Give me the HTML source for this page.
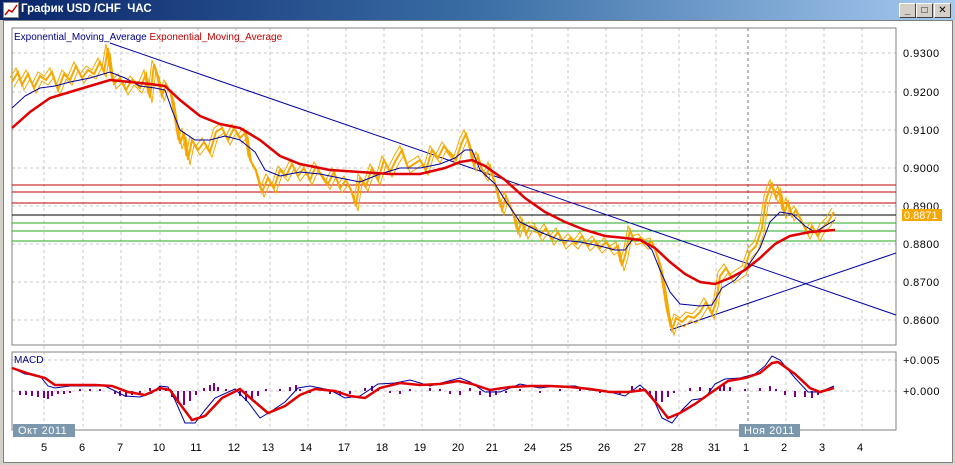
<!DOCTYPE html>
<html><head><meta charset="utf-8"><style>
body{margin:0;width:955px;height:465px;overflow:hidden;background:#d4d0c8;font-family:"Liberation Sans","DejaVu Sans",sans-serif}
.t{position:absolute;left:0;top:0;width:955px;height:20px;background:linear-gradient(90deg,#0a246a,#3a6ea5 50%,#a6caf0);}
.t span{position:absolute;left:21px;top:3px;color:#fff;font-weight:bold;font-size:11.5px}
.b{position:absolute;top:3px;width:15px;height:13px;background:#d4d0c8;border:1px solid;border-color:#fff #404040 #404040 #fff;font-size:10px;font-weight:bold;text-align:center;line-height:13px}
.w{position:absolute;left:3px;top:20px;width:948px;height:441px;background:#fff;border:1px solid #808080}
svg text{font-family:"Liberation Sans","DejaVu Sans",sans-serif}
</style></head><body>
<div class="t"><svg width="16" height="16" style="position:absolute;left:3px;top:2px"><rect x="0.5" y="0.5" width="15" height="15" fill="#fff" stroke="#888"/><polyline points="2,13 6,8 9,10 14,3" fill="none" stroke="#c00" stroke-width="1.5"/></svg><span>График USD /CHF&nbsp; ЧАС</span>
<div class="b" style="left:899px">_</div><div class="b" style="left:916px">□</div><div class="b" style="left:934px">✕</div></div>
<div class="w"></div>
<svg width="955" height="465" style="position:absolute;left:0;top:0">
<defs>
<polyline id="pr" fill="none" stroke="#f5a800" points="12,82 18,72 22,85 28,74 34,88 40,76 46,80 52,72 58,90 64,74 70,80 76,66 82,78 88,70 94,74 100,62 104,72 108,48 111,70 114,84 120,78 126,90 132,80 140,88 146,74 150,98 154,64 158,76 162,96 166,84 172,96 176,120 180,144 184,132 188,160 192,140 198,150 204,142 210,152 216,132 222,128 228,140 234,128 240,138 246,132 250,160 256,170 262,192 268,178 274,188 280,170 286,176 292,164 298,176 304,168 310,180 316,166 322,176 328,184 334,172 340,188 346,180 352,192 356,206 360,178 366,186 372,168 378,180 384,160 390,172 396,160 402,150 408,168 414,164 420,160 426,170 432,150 438,158 444,146 450,154 456,160 462,142 466,134 470,146 474,166 478,156 482,170 486,176 490,166 494,180 498,194 502,210 506,196 510,206 514,214 518,232 522,220 526,234 530,226 536,228 540,236 546,228 552,240 558,232 564,244 570,238 576,244 582,236 588,246 594,240 600,248 606,242 612,250 618,246 622,266 626,252 630,230 634,240 640,238 646,244 652,242 656,252 660,264 664,286 668,312 672,330 676,318 682,322 688,316 694,318 700,312 706,302 712,314 716,302 720,276 726,268 732,278 738,274 744,270 750,252 756,246 762,228 766,200 770,188 772,184 776,198 780,190 784,214 788,202 792,216 796,210 802,222 808,234 812,226 818,236 822,228 828,222 834,212"/>
</defs>
<g stroke="#c8c8c8" stroke-dasharray="3,3" stroke-width="1">
<line x1="12" x2="896" y1="53" y2="53"/><line x1="12" x2="896" y1="92" y2="92"/><line x1="12" x2="896" y1="130" y2="130"/><line x1="12" x2="896" y1="168" y2="168"/><line x1="12" x2="896" y1="206" y2="206"/><line x1="12" x2="896" y1="244" y2="244"/><line x1="12" x2="896" y1="282" y2="282"/><line x1="12" x2="896" y1="320" y2="320"/>
<line x1="12" x2="896" y1="360" y2="360"/><line x1="12" x2="896" y1="391" y2="391"/>
<line x1="44" x2="44" y1="28" y2="430"/><line x1="83" x2="83" y1="28" y2="430"/><line x1="121" x2="121" y1="28" y2="430"/><line x1="160" x2="160" y1="28" y2="430"/><line x1="198" x2="198" y1="28" y2="430"/><line x1="236" x2="236" y1="28" y2="430"/><line x1="270" x2="270" y1="28" y2="430"/><line x1="308" x2="308" y1="28" y2="430"/><line x1="346" x2="346" y1="28" y2="430"/><line x1="384" x2="384" y1="28" y2="430"/><line x1="422" x2="422" y1="28" y2="430"/><line x1="460" x2="460" y1="28" y2="430"/><line x1="494" x2="494" y1="28" y2="430"/><line x1="532" x2="532" y1="28" y2="430"/><line x1="568" x2="568" y1="28" y2="430"/><line x1="606" x2="606" y1="28" y2="430"/><line x1="642" x2="642" y1="28" y2="430"/><line x1="679" x2="679" y1="28" y2="430"/><line x1="716" x2="716" y1="28" y2="430"/><line x1="786" x2="786" y1="28" y2="430"/><line x1="824" x2="824" y1="28" y2="430"/><line x1="862" x2="862" y1="28" y2="430"/>
</g>
<line x1="748" x2="748" y1="28" y2="430" stroke="#777" stroke-dasharray="3,3"/>
<rect x="12" y="28" width="884" height="317" fill="none" stroke="#808080"/>
<rect x="12" y="352" width="884" height="78" fill="none" stroke="#808080"/>
<g stroke-width="1"><line x1="12" x2="896" y1="185" y2="185" stroke="#c00000"/><line x1="12" x2="896" y1="192" y2="192" stroke="#c00000"/><line x1="12" x2="896" y1="203" y2="203" stroke="#c00000"/><line x1="12" x2="896" y1="215" y2="215" stroke="#000"/><line x1="12" x2="896" y1="223" y2="223" stroke="#2a2"/><line x1="12" x2="896" y1="231" y2="231" stroke="#2a2"/><line x1="12" x2="896" y1="241" y2="241" stroke="#2a2"/></g>
<line x1="110" y1="43" x2="896" y2="315" stroke="#0000a0"/>
<line x1="670" y1="330" x2="896" y2="253" stroke="#0000a0"/>
<use href="#pr" stroke-width="2"/>
<use href="#pr" stroke-width="1" transform="translate(2,5)"/>
<use href="#pr" stroke-width="1" transform="translate(-2,-4)"/>
<polyline fill="none" stroke="#0000a0" stroke-width="1" points="12,108 25,96 40,88 55,86 70,82 90,78 110,72 125,78 140,86 155,88 165,90 172,110 180,130 195,140 210,140 225,136 240,140 255,152 265,170 280,176 300,172 320,174 340,178 360,182 380,174 400,168 420,168 440,164 455,158 465,150 472,150 480,170 495,184 505,200 520,222 540,232 560,240 580,242 600,246 615,250 625,250 632,240 642,240 652,250 660,270 670,292 680,304 700,306 712,305 722,288 735,280 748,266 760,248 770,222 780,212 792,214 805,226 815,232 825,226 835,220"/>
<polyline fill="none" stroke="#e00000" stroke-width="2.5" points="12,128 30,112 50,98 70,92 90,86 110,80 130,82 150,84 165,86 180,100 200,116 220,124 240,128 260,140 280,156 300,164 330,170 360,172 390,174 420,174 445,168 460,162 472,160 485,166 505,180 525,198 545,212 565,222 585,230 605,236 625,238 640,240 655,248 670,262 685,274 700,282 715,284 730,278 745,270 760,258 775,244 790,236 810,232 835,230"/>
<g font-size="11" fill="#000" letter-spacing="0.5">
<text x="903" y="57">0.9300</text><text x="903" y="96">0.9200</text><text x="903" y="134">0.9100</text><text x="903" y="172">0.9000</text><text x="903" y="210">0.8900</text><text x="903" y="248">0.8800</text><text x="903" y="286">0.8700</text><text x="903" y="324">0.8600</text>
<text x="903" y="364">+0.005</text><text x="903" y="395">+0.000</text>
</g>
<rect x="902" y="209" width="40" height="12" fill="#f5a800"/><text x="904" y="219" font-size="11" fill="#fff">0.8871</text>
<text x="14" y="40" font-size="10" fill="#000080">Exponential_Moving_Average <tspan fill="#c00000">Exponential_Moving_Average</tspan></text>
<text x="14" y="363" font-size="10" fill="#000080">MACD</text>
<g stroke="#800080" stroke-width="2">
<path d="M20,391v4M26,391v4M32,391v5M38,391v6M44,391v7M48,391v8M52,391v5M58,391v3M64,391v3M70,391v2M80,391v-2M90,391v-2M100,391v-2M115,391v3M120,391v5M126,391v6M132,391v4M140,391v2M150,391v-3M160,391v-5M166,391v-3M172,391v6M178,391v12M184,391v14M190,391v10M196,391v4M204,391v-3M210,391v-6M214,391v-8M218,391v-4M226,391v-2M240,391v5M246,391v10M252,391v9M258,391v5M266,391v-2M280,391v-2M290,391v-4M296,391v-6M300,391v-2M310,391v2M330,391v3M340,391v4M350,391v3M365,391v-3M372,391v-5M378,391v-3M390,391v2M400,391v3M410,391v-2M430,391v-3M440,391v-2M450,391v3M460,391v4M470,391v-3M480,391v4M490,391v6M496,391v4M506,391v2M520,391v-2M540,391v2M560,391v-2M580,391v-2M600,391v2M620,391v3M632,391v-5M640,391v-3M650,391v6M656,391v10M662,391v11M668,391v6M674,391v2M690,391v-3M700,391v-4M710,391v-3M720,391v-4M724,391v-8M730,391v-4M745,391v-2M760,391v-3M770,391v-5M776,391v-2M785,391v4M795,391v6M805,391v6M812,391v7M818,391v4"/>
</g>
<polyline fill="none" stroke="#0000a0" stroke-width="1" points="12,368 25,374 40,376 48,386 55,388 70,386 85,386 105,386 125,396 140,397 152,393 160,386 168,387 175,400 185,423 195,423 205,410 215,398 235,389 248,402 260,418 270,412 285,402 298,388 310,386 330,390 345,398 360,396 378,384 395,383 410,380 430,386 445,382 460,378 470,382 485,392 500,392 520,384 540,388 555,386 575,386 590,390 610,392 625,396 640,385 652,396 662,418 672,423 682,410 692,400 705,398 715,384 725,379 740,378 755,374 765,366 772,356 780,360 795,378 808,392 820,392 834,386"/>
<polyline fill="none" stroke="#e00000" stroke-width="2.5" points="12,368 30,374 45,378 55,385 75,385 95,385 112,386 128,392 145,395 160,388 170,390 180,404 192,420 205,416 222,398 240,389 255,402 268,413 285,406 300,395 315,389 335,391 350,396 365,398 380,388 400,383 420,385 440,384 458,381 472,384 490,390 510,387 530,386 550,386 570,387 590,389 610,392 628,392 645,390 658,405 668,418 680,413 695,404 712,392 728,381 745,378 760,373 772,363 778,362 795,374 810,388 820,392 834,388"/>
<g font-size="11" fill="#000" text-anchor="middle">
<text x="44" y="451">5</text><text x="82" y="451">6</text><text x="120" y="451">7</text><text x="159" y="451">10</text><text x="196" y="451">11</text><text x="234" y="451">12</text><text x="268" y="451">13</text><text x="306" y="451">14</text><text x="344" y="451">17</text><text x="382" y="451">18</text><text x="420" y="451">19</text><text x="458" y="451">20</text><text x="492" y="451">21</text><text x="530" y="451">24</text><text x="566" y="451">25</text><text x="604" y="451">26</text><text x="640" y="451">27</text><text x="677" y="451">28</text><text x="714" y="451">31</text><text x="746" y="451">1</text><text x="784" y="451">2</text><text x="822" y="451">3</text><text x="860" y="451">4</text>
</g>
<rect x="13" y="424" width="62" height="13" fill="#7b97ad"/><text x="18" y="434" font-size="11" fill="#fff" letter-spacing="0.5">Окт 2011</text>
<rect x="739" y="424" width="61" height="13" fill="#7b97ad"/><text x="744" y="434" font-size="11" fill="#fff" letter-spacing="0.5">Ноя 2011</text>
</svg>
</body></html>
